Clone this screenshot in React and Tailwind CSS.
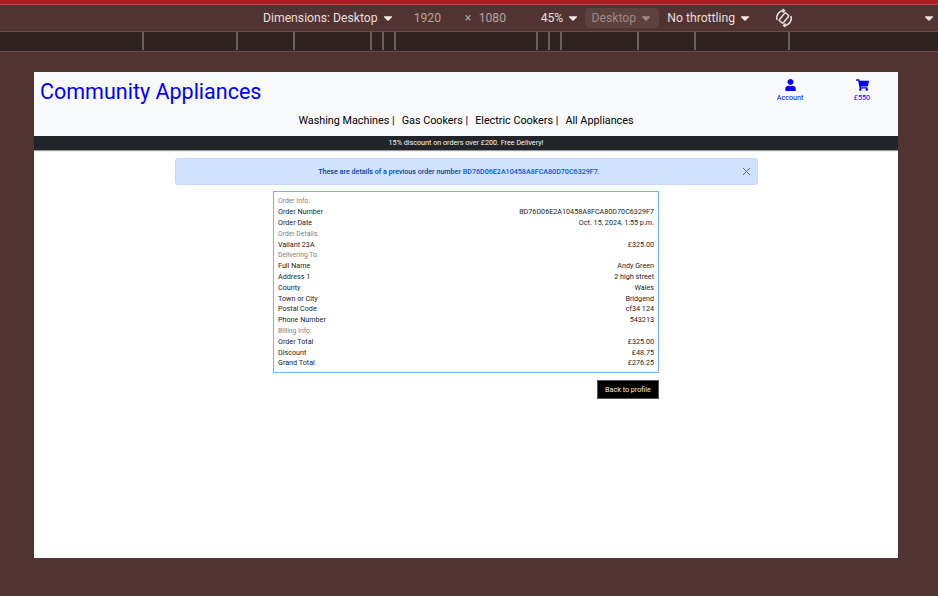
import React from 'react';
import { FaUser, FaShoppingCart, FaCaretDown } from 'react-icons/fa';

const rows = [
  { label: 'Order Info:', heading: true },
  { label: 'Order Number', value: 'BD76D06E2A10458A8FCA80D70C6329F7' },
  { label: 'Order Date', value: 'Oct. 15, 2024, 1:55 p.m.' },
  { label: 'Order Details:', heading: true },
  { label: 'Vailant 23A', value: '£325.00' },
  { label: 'Delivering To:', heading: true },
  { label: 'Full Name', value: 'Andy Green' },
  { label: 'Address 1', value: '2 high street' },
  { label: 'County', value: 'Wales' },
  { label: 'Town or City', value: 'Bridgend' },
  { label: 'Postal Code', value: 'cf34 124' },
  { label: 'Phone Number', value: '543213' },
  { label: 'Billing Info:', heading: true },
  { label: 'Order Total', value: '£325.00' },
  { label: 'Discount', value: '£48.75' },
  { label: 'Grand Total', value: '£276.25' },
];

function Caret() {
  return <FaCaretDown className="text-[#f1e9e7] text-[14px] ml-[3px]" />;
}

function DevToolbar() {
  return (
    <div className="h-[27px] flex items-center text-[12.2px] text-[#e8dfdd] border-b border-[#6d4c47]">
      <div className="ml-[263px] flex items-center">Dimensions: Desktop<Caret /></div>
      <div className="ml-[19px] w-[43px] text-[#b3a5a1]">1920</div>
      <div className="ml-[8px] w-[14px] text-[#b3a5a1]">×</div>
      <div className="w-[62px] text-[#b3a5a1]">1080</div>
      <div className="flex items-center">45%<Caret /></div>
      <div className="ml-[5px] h-[20px] w-[74px] rounded bg-[#5d413c] text-[#9a8985] flex items-center justify-center">
        Desktop<FaCaretDown className="text-[#9a8985] text-[14px] ml-[3px]" />
      </div>
      <div className="ml-[8px] flex items-center">No throttling<Caret /></div>
      <svg className="ml-[22px]" width="20" height="20" viewBox="0 0 20 20" fill="none" stroke="#e6dcda" strokeWidth="1.5">
        <rect x="7.5" y="5" width="5" height="10" rx="1" transform="rotate(40 10 10)" />
        <path d="M3 12a7.5 7.5 0 0 1 7-9.5" />
        <path d="M8.5 1l2 1.5-2 2" />
        <path d="M17 8a7.5 7.5 0 0 1-7 9.5" />
        <path d="M11.5 19l-2-1.5 2-2" />
      </svg>
      <FaCaretDown className="ml-auto mr-[2px] text-[#e8dfdd] text-[14px]" />
    </div>
  );
}

function Ruler() {
  return (
    <div className="h-[20px] bg-[#302220] border-b border-[#6d4c47] flex">
      <div className="w-[144px] h-[18px] border-r-2 border-[#6f605d]" />
      <div className="w-[94px] h-[18px] border-r-2 border-[#6f605d]" />
      <div className="w-[57px] h-[18px] border-r-2 border-[#6f605d]" />
      <div className="w-[77px] h-[18px] border-r-2 border-[#6f605d]" />
      <div className="w-[12px] h-[18px] border-r-2 border-[#6f605d]" />
      <div className="w-[12px] h-[18px] border-r-2 border-[#6f605d]" />
      <div className="w-[142px] h-[18px] border-r-2 border-[#6f605d]" />
      <div className="w-[12px] h-[18px] border-r-2 border-[#6f605d]" />
      <div className="w-[12px] h-[18px] border-r-2 border-[#6f605d]" />
      <div className="w-[77px] h-[18px] border-r-2 border-[#6f605d]" />
      <div className="w-[57px] h-[18px] border-r-2 border-[#6f605d]" />
      <div className="w-[94px] h-[18px] border-r-2 border-[#6f605d]" />
    </div>
  );
}

function Header() {
  return (
    <div className="bg-[#f8f9fa] h-[64px]">
      <div className="flex h-[39px]">
        <a className="ml-[6px] mt-[5px] text-[21.5px] leading-[30px] text-[#0000ff]">Community Appliances</a>
        <div className="ml-auto flex text-[#0000ff] text-[7.2px] leading-[9px]">
          <div className="w-[60px] mr-[12px] mt-[7px] flex flex-col items-center">
            <FaUser className="text-[11px] h-[12px] mb-[2px]" />
            <span>Account</span>
          </div>
          <div className="w-[60px] mr-[6px] mt-[7px] flex flex-col items-center">
            <FaShoppingCart className="text-[13px] h-[12px] mb-[2px]" />
            <span>£550</span>
          </div>
        </div>
      </div>
      <nav className="flex justify-center text-[10.8px] leading-[16px] text-black mt-[2px]">
        <span>Washing Machines |</span>
        <span className="ml-[7px]">Gas Cookers |</span>
        <span className="ml-[7px]">Electric Cookers |</span>
        <span className="ml-[7px]">All Appliances</span>
      </nav>
    </div>
  );
}

export default function App() {
  return (
    <div className="h-[596px] w-[938px] overflow-hidden bg-[#513431] font-['Roboto',sans-serif]">
      <div className="h-[5px] bg-[#a91f23] border-b border-[#c2474a]" />
      <DevToolbar />
      <Ruler />
      <div className="ml-[34px] mt-[20px] w-[864px] h-[486px] bg-white">
        <Header />
        <div className="h-[14px] bg-[#212529] text-center text-[7.2px] leading-[14px] text-[#f8f9fa] shadow-[0_1px_1px_rgba(0,0,0,0.4)]">
          15% discount on orders over £200. Free Delivery!
        </div>
        <div className="relative ml-[141px] w-[583px] mt-[8px] h-[27px] rounded-[3px] border border-[#c4dafc] bg-[#cfe2ff] pl-[7px] pr-[22px] text-center text-[7.15px] font-medium leading-[25px] text-[#084298]">
          These are details of a previous order number <span className="text-[#0a58ca]">BD76D06E2A10458A8FCA80D70C6329F7</span>.
          <svg className="absolute right-[6.5px] top-[8px]" width="9" height="9" viewBox="0 0 9 9" stroke="#5a6a80" strokeWidth="1">
            <path d="M1 1l7 7M8 1l-7 7" />
          </svg>
        </div>
        <div className="ml-[239px] mt-[6px] w-[386px] h-[182px] border border-[#74aeff] px-[4px] pt-[4.4px] text-[7.2px] text-[#212529]">
          {rows.map(row => (
            <div key={row.label} className="flex justify-between h-[10.8px] leading-[10.8px]">
              <span className={row.heading ? 'text-[#7b8288] text-[6.8px]' : ''}>{row.label}</span>
              {row.value && <span>{row.value}</span>}
            </div>
          ))}
        </div>
        <div className="ml-[239px] w-[386px] mt-[7px] flex justify-end">
          <button className="h-[19px] w-[62px] bg-black border border-[#555] pt-[1px] text-[#eee] text-[7.2px]">Back to profile</button>
        </div>
      </div>
    </div>
  );
}
